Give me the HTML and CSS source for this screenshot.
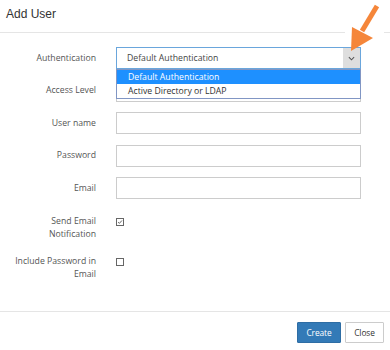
FILE: index.html
```html
<!DOCTYPE html>
<html lang="en">
<head>
    <meta charset="UTF-8">
    <meta name="viewport" content="width=device-width, initial-scale=1.0">
    <title>Add User</title>
    <link rel="stylesheet" href="styles.css">
</head>
<body>
    <div class="modal">
        <div class="modal-header">
            <h4 class="modal-title">Add User</h4>
        </div>

        <div class="modal-body">
            <div class="form-row">
                <label class="form-label">Authentication</label>
                <div class="select select-focus">
                    <span class="select-value">Default Authentication</span>
                    <span class="select-arrow">
                        <svg viewBox="0 0 8 5" fill="none" stroke="currentColor" stroke-width="1.2">
                            <polyline points="1,1 4,4 7,1"/>
                        </svg>
                    </span>
                    <ul class="select-menu">
                        <li class="select-option active">Default Authentication</li>
                        <li class="select-option">Active Directory or LDAP</li>
                    </ul>
                </div>
            </div>
            <div class="form-row">
                <label class="form-label">Access Level</label>
                <div class="select"></div>
            </div>
            <div class="form-row">
                <label class="form-label">User name</label>
                <div class="input"></div>
            </div>
            <div class="form-row">
                <label class="form-label">Password</label>
                <div class="input"></div>
            </div>
            <div class="form-row">
                <label class="form-label">Email</label>
                <div class="input"></div>
            </div>
            <div class="form-row check-row">
                <label class="form-label">Send Email<br>Notification</label>
                <span class="checkbox">
                    <svg viewBox="0 0 8 8" fill="none" stroke="currentColor" stroke-width="1.1">
                        <polyline points="1.5,4.2 3.2,5.8 6.6,2"/>
                    </svg>
                </span>
            </div>
            <div class="form-row check-row check-row-last">
                <label class="form-label">Include Password in<br>Email</label>
                <span class="checkbox"></span>
            </div>
        </div>

        <div class="modal-footer">
            <button class="btn btn-primary">Create</button>
            <button class="btn btn-close">Close</button>
        </div>

        <svg class="callout-arrow" viewBox="340 0 50 55">
            <rect x="345" y="3" width="39" height="42" fill="#fff"/>
            <line x1="377" y1="6" x2="362" y2="31" stroke="#f5863a" stroke-width="5"/>
            <polygon points="352,27 373,38 351,51" fill="#f5863a"/>
        </svg>
    </div>
</body>
</html>
```

FILE: styles.css
```css
* {
    margin: 0;
    padding: 0;
    box-sizing: border-box;
}

body {
    background: #fff;
    color: #555;
    font-family: "Open Sans", "Noto Sans", sans-serif;
    font-size: 8.7px;
}

.modal {
    position: relative;
    width: 390px;
    height: 350px;
    display: flex;
    flex-direction: column;
    background: #fff;
}

.modal-header {
    height: 33px;
    padding: 8px 0 0 6px;
    border-bottom: 1px solid #e5e5e5;
}

.modal-title {
    font-family: "Liberation Sans", Arial, sans-serif;
    font-size: 12px;
    font-weight: normal;
    line-height: 12px;
    color: #333;
}

.modal-body {
    flex: 1;
    padding-top: 14px;
}

.form-row {
    display: grid;
    grid-template-columns: 96px 245px;
    column-gap: 20px;
    align-items: center;
}

.form-row + .form-row {
    margin-top: 10.5px;
}

.form-label {
    text-align: right;
    line-height: 13px;
}

.select,
.input {
    position: relative;
    height: 22px;
    border: 1px solid #ccc;
    background: #fff;
}

.select-focus {
    border-color: #6aa6dc;
    display: flex;
    align-items: center;
    z-index: 2;
}

.select-value {
    padding-left: 10px;
    color: #444;
}

.select-arrow {
    position: absolute;
    top: 0;
    right: 0;
    width: 17px;
    height: 20px;
    background: #dedede;
    display: flex;
    align-items: center;
    justify-content: center;
    color: #555;
}

.select-arrow svg {
    width: 7px;
    height: 5px;
}

.select-menu {
    position: absolute;
    top: 21px;
    left: -1px;
    width: 245px;
    list-style: none;
    border: 1px solid #8196c4;
    background: #fff;
}

.select-option {
    height: 14px;
    line-height: 14px;
    padding-left: 11px;
    color: #333;
}

.select-option.active {
    background: #1e90ff;
    color: #fff;
}

.check-row {
    align-items: start;
}

.form-row + .check-row {
    margin-top: 16px;
}

.form-row + .check-row-last {
    margin-top: 14px;
}

.checkbox {
    width: 8px;
    height: 8px;
    margin-top: 3px;
    border: 1px solid #666;
    color: #444;
    display: flex;
}

.checkbox svg {
    width: 6px;
    height: 6px;
}

.modal-footer {
    height: 39px;
    border-top: 1px solid #e5e5e5;
    padding: 10px 6px 0 0;
    display: flex;
    justify-content: flex-end;
    align-items: flex-start;
    gap: 4px;
}

.btn {
    height: 21px;
    border: 1px solid #ccc;
    border-radius: 1px;
    background: #fff;
    color: #333;
    font-family: inherit;
    font-size: 8.4px;
    letter-spacing: -0.1px;
}

.btn-primary {
    width: 44px;
    background: #337ab7;
    border-color: #2e6da4;
    color: #fff;
}

.btn-close {
    width: 39px;
}

.callout-arrow {
    position: absolute;
    left: 340px;
    top: 0;
    width: 50px;
    height: 55px;
    z-index: 3;
}
```
